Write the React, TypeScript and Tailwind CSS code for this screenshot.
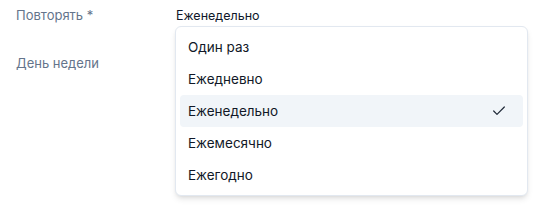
import React from "react";

const items = ["Один раз", "Ежедневно", "Еженедельно", "Ежемесячно", "Ежегодно"];

export default function App() {
  return (
    <div className="relative w-[546px] h-[207px] bg-white" style={{ fontFamily: "Inter, 'Noto Sans', sans-serif" }}>
      <div className="flex flex-col pl-4 pt-[7px]">
        <div className="flex h-[18px] items-center">
          <div className="w-[160px] text-[13px] text-[#64748b]">Повторять *</div>
          <div className="relative text-[12.5px] text-[#0f172a]">
            Еженедельно
            <div className="absolute left-[-1px] top-[19px] w-[353px] rounded-md border border-[#e2e8f0] bg-white p-1 shadow-md">
              {items.map((it) => {
                const sel = it === "Еженедельно";
                return (
                  <div
                    key={it}
                    className={`flex h-8 items-center justify-between rounded pl-2 pr-4 text-[13.5px] text-[#111827] ${sel ? "bg-[#f1f5f9]" : ""}`}
                  >
                    <span>{it}</span>
                    {sel && (
                      <svg width="16" height="16" viewBox="0 0 24 24" fill="none" stroke="#1f2937" strokeWidth="1.8" strokeLinecap="round" strokeLinejoin="round">
                        <path d="M20 6 9 17l-5-5" />
                      </svg>
                    )}
                  </div>
                );
              })}
            </div>
          </div>
        </div>
        <div className="mt-[30px] flex h-[18px] items-center">
          <div className="w-[160px] text-[13px] text-[#64748b]">День недели</div>
        </div>
      </div>
    </div>
  );
}
